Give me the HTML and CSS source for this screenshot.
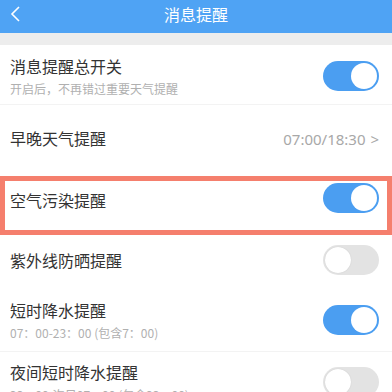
FILE: index.html
```html
<!DOCTYPE html>
<html lang="zh-CN">
<head>
    <meta charset="UTF-8">
    <title>消息提醒</title>
    <link rel="stylesheet" href="styles.css">
</head>
<body>
    <div class="page">
        <div class="topbar">
            <svg class="back" width="12" height="16" viewBox="0 0 12 16">
                <polyline points="9,1 2,8 9,15" fill="none" stroke="#fff" stroke-width="1.6"/>
            </svg>
            <span class="topbar-title">消息提醒</span>
        </div>
        <div class="band"></div>

        <div class="list">
            <div class="row row-main">
                <div class="row-text">
                    <div class="row-title">消息提醒总开关</div>
                    <div class="row-sub">开启后，不再错过重要天气提醒</div>
                </div>
                <span class="switch on"></span>
            </div>
            <div class="row row-time">
                <div class="row-title">早晚天气提醒</div>
                <div class="row-value">07:00/18:30 <span class="arrow">&gt;</span></div>
            </div>
            <div class="row row-marked">
                <div class="row-title">空气污染提醒</div>
                <span class="switch on"></span>
            </div>
            <div class="row row-uv">
                <div class="row-title">紫外线防晒提醒</div>
                <span class="switch"></span>
            </div>
            <div class="row row-rain">
                <div class="row-text">
                    <div class="row-title">短时降水提醒</div>
                    <div class="row-sub">07：00-23：00 (包含7：00)</div>
                </div>
                <span class="switch on"></span>
            </div>
            <div class="row row-night">
                <div class="row-text">
                    <div class="row-title">夜间短时降水提醒</div>
                    <div class="row-sub">23：00-次日07：00 (包含23：00)</div>
                </div>
                <span class="switch"></span>
            </div>
        </div>
    </div>
</body>
</html>
```

FILE: styles.css
```css
* {
    margin: 0;
    padding: 0;
    box-sizing: border-box;
}

html, body {
    width: 392px;
    height: 392px;
    overflow: hidden;
    background: #fff;
}

body {
    font-family: "Noto Sans CJK SC", "Noto Sans", sans-serif;
    color: #333;
}

.topbar {
    height: 33px;
    background: #4fa3f4;
    display: flex;
    align-items: center;
    justify-content: center;
    position: relative;
}

.back {
    position: absolute;
    left: 10px;
    top: 6px;
}

.topbar-title {
    color: #fff;
    font-size: 16px;
    line-height: 1;
    margin-top: -5px;
}

.band {
    height: 12px;
    background: #ededed;
}

.row {
    display: flex;
    align-items: center;
    justify-content: space-between;
    padding: 0 13px 0 10px;
    border-bottom: 1px solid #f3f3f3;
}

.row-title {
    font-size: 16px;
    line-height: 22px;
}

.row-sub {
    font-size: 12px;
    line-height: 16px;
    color: #b0b0b0;
    margin-top: 4px;
}

.row-value {
    font-family: "Noto Sans", sans-serif;
    font-size: 15px;
    color: #a8a8a8;
    margin-top: 2px;
}

.arrow {
    margin-left: 1px;
}

.row-main {
    height: 60px;
    padding-top: 2px;
}

.row-time {
    height: 71px;
    padding-bottom: 6px;
    border-bottom: none;
}

.row-marked {
    height: 59px;
    border: 5px solid #f57f6d;
    padding: 0 8px 0 5px;
    align-items: flex-start;
}

.row-marked .row-title {
    margin-top: 8px;
}

.row-marked .switch {
    margin-top: 2px;
}

.row-uv {
    height: 52px;
    border-bottom: none;
    padding-bottom: 2px;
}

.row-rain {
    height: 65px;
    padding-top: 2px;
}

.row-night {
    height: 60px;
    align-items: flex-start;
    padding-top: 9px;
}

.row-night .switch {
    margin-top: 6px;
}

.switch {
    width: 56px;
    height: 30px;
    border-radius: 15px;
    background: #e3e3e3;
    position: relative;
    flex-shrink: 0;
}

.switch::after {
    content: "";
    position: absolute;
    left: 2px;
    top: 2px;
    width: 26px;
    height: 26px;
    border-radius: 50%;
    background: #fff;
    box-shadow: 0 0 1px #bbb;
}

.switch.on {
    background: #4b9ef1;
}

.switch.on::after {
    left: 28px;
    box-shadow: none;
}
```
